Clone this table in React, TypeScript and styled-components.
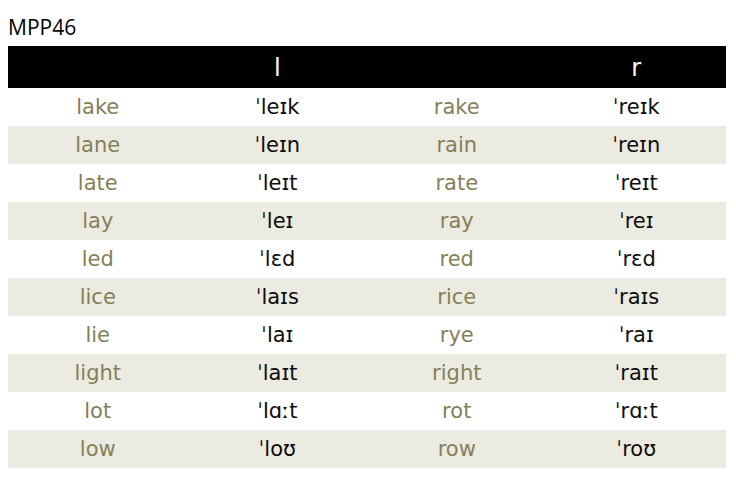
import React from "react";
import styled, { createGlobalStyle } from "styled-components";

const Global = createGlobalStyle`
  html, body { margin: 0; padding: 0; background: #ffffff; }
`;

const Page = styled.div`
  padding: 12px 10px 0 8px;
  width: 736px;
  box-sizing: border-box;
`;

const Title = styled.div`
  font-family: "Open Sans", "Liberation Sans", sans-serif;
  font-size: 21px;
  line-height: 30px;
  color: #000;
  height: 34px;
`;

const Table = styled.div`
  width: 718px;
  display: grid;
  grid-template-columns: repeat(4, 1fr);
`;

const HeaderCell = styled.div`
  background: #000;
  height: 42px;
  display: flex;
  align-items: center;
  justify-content: center;
  color: #fff;
  font-family: "DejaVu Sans", sans-serif;
  font-size: 24px;
  padding-top: 1px;
  box-sizing: border-box;
`;

const Cell = styled.div<{ $shade: boolean; $word: boolean }>`
  height: 38px;
  display: flex;
  align-items: center;
  justify-content: center;
  background: ${(p) => (p.$shade ? "#ecebe2" : "#ffffff")};
  color: ${(p) => (p.$word ? "#858058" : "#0d0d0d")};
  font-family: "DejaVu Sans", sans-serif;
  font-size: 21px;
  padding-top: 0px;
  box-sizing: border-box;
`;

const rows: [string, string, string, string][] = [
  ["lake", "ˈleɪk", "rake", "ˈreɪk"],
  ["lane", "ˈleɪn", "rain", "ˈreɪn"],
  ["late", "ˈleɪt", "rate", "ˈreɪt"],
  ["lay", "ˈleɪ", "ray", "ˈreɪ"],
  ["led", "ˈlɛd", "red", "ˈrɛd"],
  ["lice", "ˈlaɪs", "rice", "ˈraɪs"],
  ["lie", "ˈlaɪ", "rye", "ˈraɪ"],
  ["light", "ˈlaɪt", "right", "ˈraɪt"],
  ["lot", "ˈlɑːt", "rot", "ˈrɑːt"],
  ["low", "ˈloʊ", "row", "ˈroʊ"],
];

export default function App() {
  return (
    <Page>
      <Global />
      <Title>MPP46</Title>
      <Table>
        <HeaderCell />
        <HeaderCell>l</HeaderCell>
        <HeaderCell />
        <HeaderCell>r</HeaderCell>
        {rows.map((r, i) =>
          r.map((t, j) => (
            <Cell key={`${i}-${j}`} $shade={i % 2 === 1} $word={j % 2 === 0}>
              {t}
            </Cell>
          ))
        )}
      </Table>
    </Page>
  );
}
